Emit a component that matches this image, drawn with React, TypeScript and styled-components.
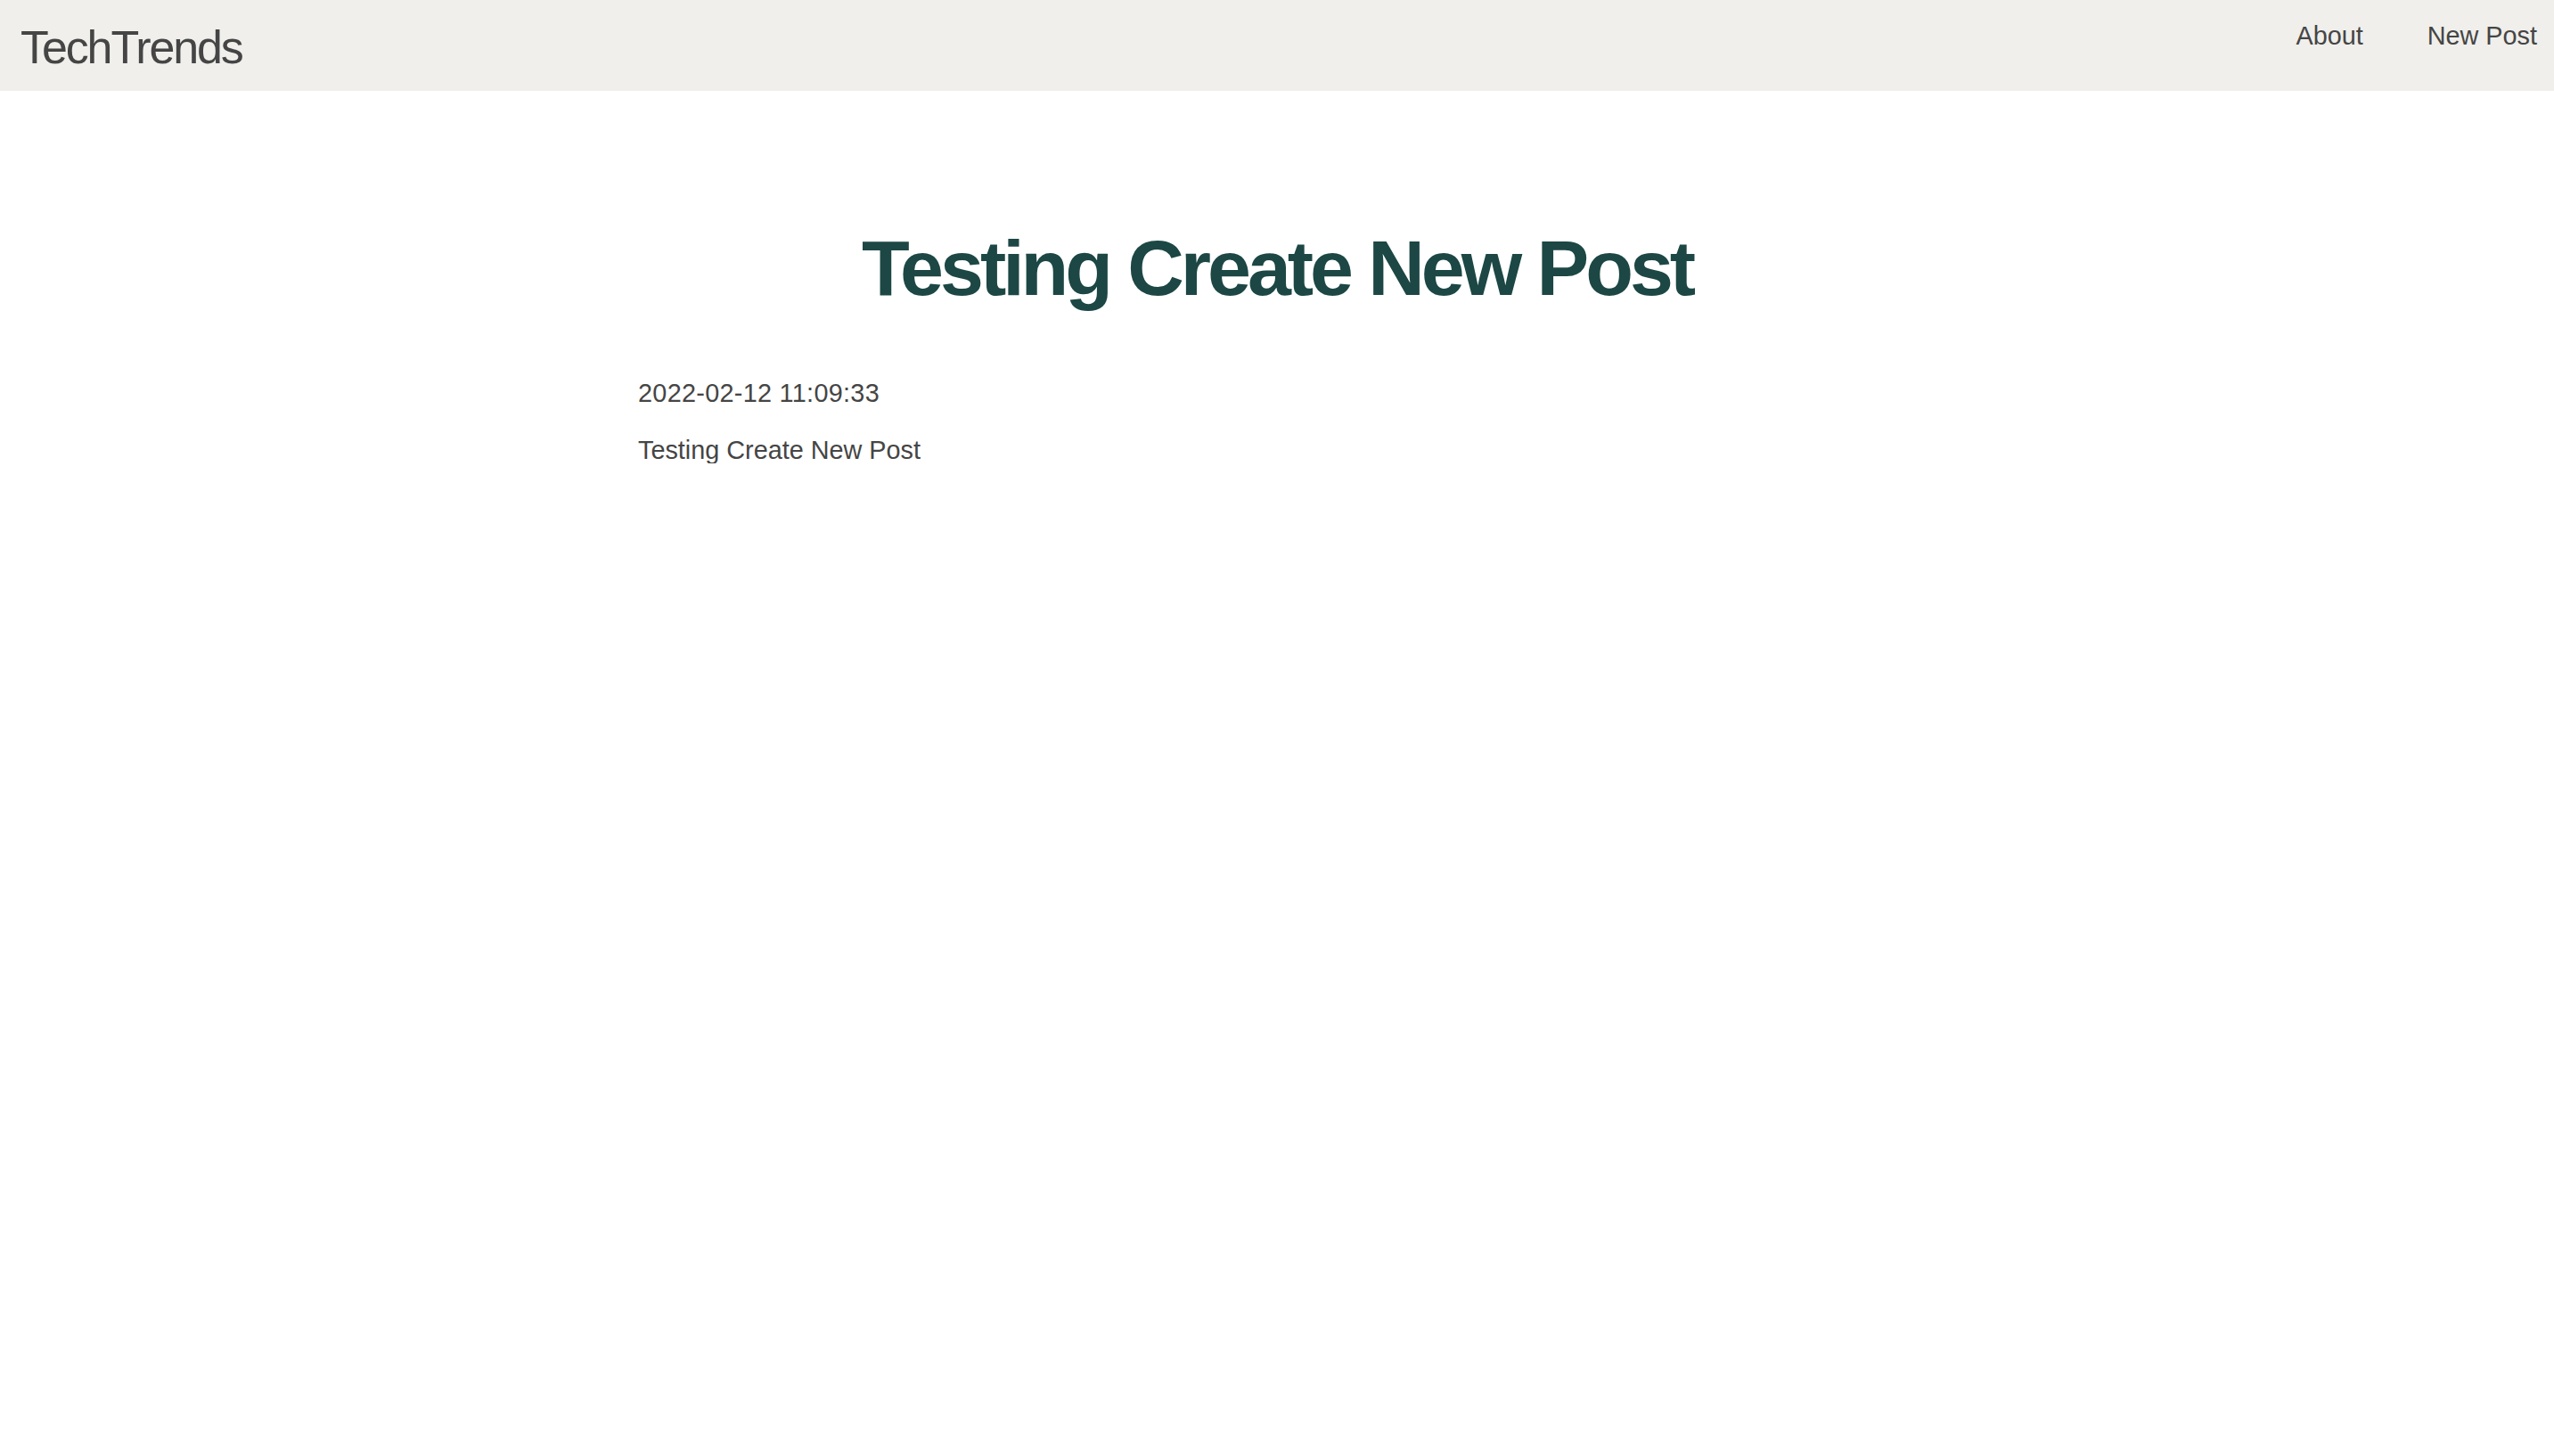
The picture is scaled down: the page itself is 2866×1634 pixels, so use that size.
import React from "react";
import styled, { createGlobalStyle } from "styled-components";

const GlobalStyle = createGlobalStyle`
  html, body {
    margin: 0;
    padding: 0;
    background: #ffffff;
    font-family: "Liberation Sans", Arial, Helvetica, sans-serif;
    color: #444444;
  }
`;

const NavBar = styled.nav`
  display: flex;
  justify-content: space-between;
  align-items: flex-start;
  height: 102px;
  box-sizing: border-box;
  padding: 0 19px 0 23px;
  background: #f0efeb;
`;

const Brand = styled.a`
  margin-top: 27px;
  font-size: 52px;
  line-height: 1;
  letter-spacing: -2.1px;
  color: #454545;
  text-decoration: none;
`;

const NavLinks = styled.ul`
  display: flex;
  gap: 72px;
  list-style: none;
  margin: 26px 0 0;
  padding: 0;
`;

const NavLink = styled.a`
  font-size: 28.8px;
  line-height: 1;
  color: #454545;
  text-decoration: none;
`;

const Container = styled.main`
  max-width: 1434px;
  margin: 0 auto;
  display: flex;
  flex-direction: column;
`;

const Title = styled.h1`
  margin: 154.5px 0 0;
  font-size: 88px;
  font-weight: 700;
  line-height: 1;
  letter-spacing: -4.05px;
  text-align: center;
  color: #1c4744;
`;

const Text = styled.p<{ $gap: number; $spacing?: number }>`
  margin: ${(p) => p.$gap}px 0 0;
  font-size: 28.8px;
  line-height: 1;
  letter-spacing: ${(p) => p.$spacing ?? 0}px;
  color: #454545;
`;

export default function App() {
  return (
    <>
      <GlobalStyle />
      <NavBar>
        <Brand href="#">TechTrends</Brand>
        <NavLinks>
          <li>
            <NavLink href="#">About</NavLink>
          </li>
          <li>
            <NavLink href="#">New Post</NavLink>
          </li>
        </NavLinks>
      </NavBar>
      <Container>
        <Title>Testing Create New Post</Title>
        <Text $gap={82} $spacing={0.3}>2022-02-12 11:09:33</Text>
        <Text $gap={36}>Testing Create New Post</Text>
      </Container>
    </>
  );
}
